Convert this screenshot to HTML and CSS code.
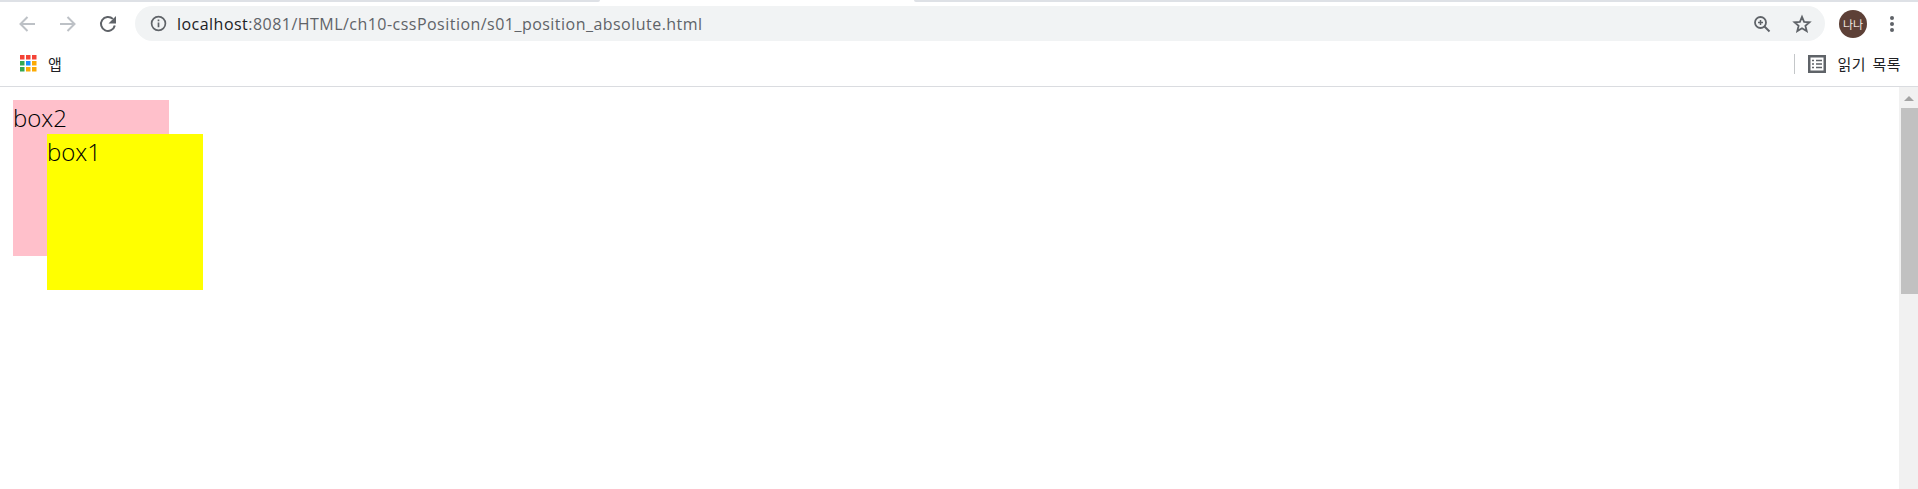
FILE: index.html
```html
<!DOCTYPE html>
<html lang="ko">
<head>
<meta charset="utf-8">
<title>s01_position_absolute</title>
<link rel="stylesheet" href="styles.css">
</head>
<body>
<div class="tabedge"><div class="tabedge-left"></div><div class="tabedge-right"></div></div>
<header class="toolbar">
  <div class="nav">
    <svg class="nav-icon" viewBox="0 0 20 20"><path d="M18 10H4M10.500 3 3.500 10l7 7" fill="none" stroke="#bdc1c6" stroke-width="2"/></svg>
    <svg class="nav-icon" viewBox="0 0 20 20"><path d="M2 10h14M9.500 3 16.500 10l-7 7" fill="none" stroke="#bdc1c6" stroke-width="2"/></svg>
    <svg class="nav-icon" viewBox="0 0 20 20"><path d="M16.800 11.500A7 7 0 1 1 14.900 4.900" fill="none" stroke="#5f6368" stroke-width="2"/><path d="M18 2v7.500h-7.500z" fill="#5f6368"/></svg>
  </div>
  <div class="omnibox">
    <svg class="info" viewBox="0 0 16 16"><circle cx="8" cy="8" r="6.500" fill="none" stroke="#5f6368" stroke-width="1.600"/><path d="M8 7v4.500M8 4.300v1.500" stroke="#5f6368" stroke-width="1.600"/></svg>
    <span class="url"><span class="host">localhost</span>:8081/HTML/ch10-cssPosition/s01_position_absolute.html</span>
    <span class="spacer"></span>
    <svg class="omni-icon" viewBox="0 0 20 20"><circle cx="8.500" cy="8.500" r="5.500" fill="none" stroke="#5f6368" stroke-width="1.800"/><path d="M12.500 12.500 17.500 17.500" stroke="#5f6368" stroke-width="2"/><path d="M8.500 6v5M6 8.500h5" stroke="#5f6368" stroke-width="1.500"/></svg>
    <svg class="omni-icon" viewBox="0 0 20 20"><path d="M10 2.800 12.100 7.900 17.500 8.300 13.400 11.800 14.700 17.100 10 14.200 5.300 17.100 6.600 11.800 2.500 8.300 7.900 7.900z" fill="none" stroke="#5f6368" stroke-width="1.800"/></svg>
  </div>
  <div class="avatar">나나</div>
  <svg class="menu" viewBox="0 0 6 20"><circle cx="3" cy="4" r="2" fill="#5f6368"/><circle cx="3" cy="10" r="2" fill="#5f6368"/><circle cx="3" cy="16" r="2" fill="#5f6368"/></svg>
</header>
<nav class="bookmarks">
  <svg class="apps" viewBox="0 0 17 17">
    <rect x="0" y="0" width="4.500" height="4.500" fill="#f44336"/><rect x="6" y="0" width="4.500" height="4.500" fill="#f44336"/><rect x="12" y="0" width="4.500" height="4.500" fill="#f44336"/>
    <rect x="0" y="6" width="4.500" height="4.500" fill="#34a853"/><rect x="6" y="6" width="4.500" height="4.500" fill="#1a8cff"/><rect x="12" y="6" width="4.500" height="4.500" fill="#fbaa04"/>
    <rect x="0" y="12" width="4.500" height="4.500" fill="#34a853"/><rect x="6" y="12" width="4.500" height="4.500" fill="#fbaa04"/><rect x="12" y="12" width="4.500" height="4.500" fill="#fbaa04"/>
  </svg>
  <span class="bm-label">앱</span>
  <span class="spacer"></span>
  <span class="divider"></span>
  <svg class="reader" viewBox="0 0 18 18"><rect x="1.250" y="1.250" width="15.500" height="15.500" fill="none" stroke="#5f6368" stroke-width="2.500"/><path d="M4 5.500h2M8 5.500h6M4 9h2M8 9h6M4 12.500h2M8 12.500h6" stroke="#5f6368" stroke-width="1.500"/></svg>
  <span class="reader-label">읽기 목록</span>
</nav>
<main class="viewport">
  <div class="page">
    <div class="box box2">box2</div>
    <div class="box box1">box1</div>
  </div>
  <div class="scrollbar">
    <div class="arrow"></div>
    <div class="thumb"></div>
  </div>
</main>
</body>
</html>
```
FILE: styles.css
```css
* { box-sizing: border-box; }
html, body { margin: 0; height: 100%; overflow: hidden; background: #fff; }
body {
  display: flex;
  flex-direction: column;
  font-family: "Open Sans", "Noto Sans CJK KR", sans-serif;
}
.tabedge { display: flex; height: 2px; flex: none; background: #fff; }
.tabedge-left { width: 600px; background: #dee1e6; border-bottom-right-radius: 4px; }
.tabedge-right { flex: 1; margin-left: 314px; background: #dee1e6; border-bottom-left-radius: 4px; }
.toolbar {
  flex: none;
  height: 43px;
  display: flex;
  align-items: center;
}
.nav { display: flex; align-items: center; gap: 20.500px; padding-left: 17px; }
.nav-icon { width: 20px; height: 20px; display: block; }
.omnibox {
  flex: none;
  width: 1690px;
  height: 35px;
  margin-left: 17px;
  border-radius: 18px;
  background: #f1f3f4;
  display: flex;
  align-items: center;
  padding: 0 13px 0 15px;
}
.info { width: 17px; height: 17px; flex: none; }
.url {
  margin-left: 10px;
  font-size: 16px;
  letter-spacing: 0.470px;
  color: #5f6368;
  white-space: nowrap;
}
.host { color: #202124; }
.spacer { flex: 1; }
.omni-icon { width: 20px; height: 20px; flex: none; margin-left: 20px; }
.avatar {
  flex: none;
  width: 28px;
  height: 28px;
  margin-left: 14px;
  border-radius: 50%;
  background: #5d4037;
  color: #f3e9e4;
  font-size: 11px;
  display: flex;
  align-items: center;
  justify-content: center;
}
.menu { width: 6px; height: 20px; flex: none; margin-left: 22px; }
.bookmarks {
  flex: none;
  height: 42px;
  display: flex;
  align-items: center;
  padding: 0 17px 4px 20px;
  border-bottom: 1px solid #dadce0;
}
.apps { width: 17px; height: 17px; flex: none; }
.bm-label { margin-left: 11px; font-size: 15px; color: #202124; }
.divider { width: 1px; height: 20px; background: #c4c7c9; }
.reader { width: 18px; height: 18px; flex: none; margin-left: 13px; }
.reader-label { margin-left: 11px; font-size: 15px; letter-spacing: 0.500px; word-spacing: 2px; color: #202124; white-space: nowrap; }
.viewport { flex: 1; display: flex; min-height: 0; }
.page { flex: 1; position: relative; }
.box {
  position: absolute;
  width: 156px;
  height: 156px;
  font-size: 24px;
  font-weight: 300;
  line-height: 36px;
  color: #000;
}
.box2 { left: 13px; top: 13px; background: #ffc0cb; }
.box1 { left: 47px; top: 47px; background: #ffff00; }
.scrollbar {
  flex: none;
  width: 19px;
  background: #f1f1f1;
  display: flex;
  flex-direction: column;
  align-items: flex-end;
}
.arrow {
  align-self: center;
  margin-top: 9px;
  width: 0;
  height: 0;
  border-left: 5px solid transparent;
  border-right: 5px solid transparent;
  border-bottom: 5px solid #a3a3a3;
}
.thumb { width: 17px; height: 186px; margin-top: 7px; background: #c1c1c1; }
```
